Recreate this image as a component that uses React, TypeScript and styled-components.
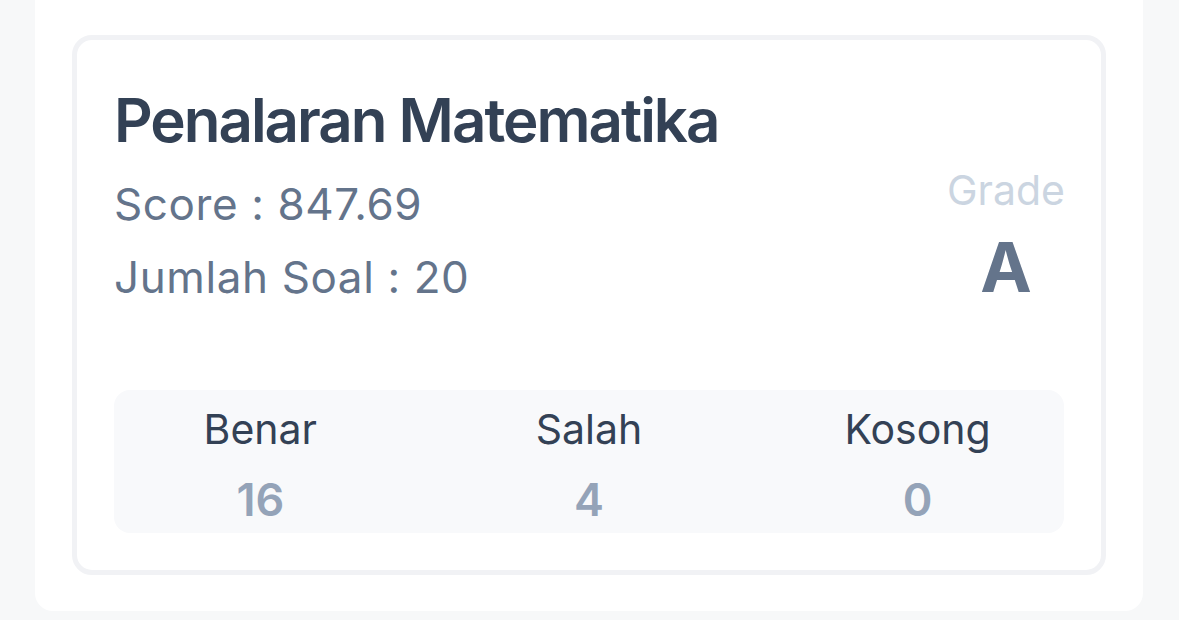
import styled, { createGlobalStyle } from "styled-components"

const GlobalStyle = createGlobalStyle`
    * {
        box-sizing: border-box;
    }
    body {
        margin: 0;
        background: #f7f8f9;
        font-family: Inter, "Noto Sans", sans-serif;
    }
`

const stats = [
    { label: "Benar", value: 16 },
    { label: "Salah", value: 4 },
    { label: "Kosong", value: 0 },
]

export default function App() {
    return (
        <>
            <GlobalStyle />
            <Panel>
                <Card>
                    <Title>Penalaran Matematika</Title>
                    <InfoRow>
                        <Info>
                            <InfoLine>Score : 847.69</InfoLine>
                            <InfoLine>Jumlah Soal : 20</InfoLine>
                        </Info>
                        <GradeBox>
                            <GradeLabel>Grade</GradeLabel>
                            <GradeValue>A</GradeValue>
                        </GradeBox>
                    </InfoRow>
                    <Stats>
                        {stats.map((s) => (
                            <Stat key={s.label}>
                                <StatLabel>{s.label}</StatLabel>
                                <StatValue>{s.value}</StatValue>
                            </Stat>
                        ))}
                    </Stats>
                </Card>
            </Panel>
        </>
    )
}

const Panel = styled.div`
    margin: 0 36px 0 35px;
    padding: 35px 37px 36px 37px;
    background: #ffffff;
    border-radius: 0 0 18px 18px;
`
const Card = styled.div`
    border: 5px solid #f1f2f5;
    border-radius: 20px;
    padding: 44px 37px 37px 37px;
    background: #ffffff;
`
const Title = styled.h2`
    margin: 0;
    color: #334155;
    font-size: 60px;
    font-weight: 600;
    line-height: 72px;
    letter-spacing: -2px;
`
const InfoRow = styled.div`
    display: flex;
    justify-content: space-between;
    align-items: flex-start;
    margin-top: 12px;
`
const Info = styled.div`
    display: flex;
    flex-direction: column;
`
const InfoLine = styled.div`
    color: #64748b;
    font-size: 44px;
    font-weight: 400;
    line-height: 73px;
    letter-spacing: 0.6px;
`
const GradeBox = styled.div`
    display: flex;
    flex-direction: column;
    align-items: center;
    width: 116px;
    margin-top: -2px;
`
const GradeLabel = styled.div`
    color: #cbd5e1;
    font-size: 41px;
    line-height: 48px;
`
const GradeValue = styled.div`
    margin-top: 13px;
    color: #64748b;
    font-size: 69px;
    font-weight: 700;
    line-height: 80px;
`
const Stats = styled.div`
    display: grid;
    grid-template-columns: repeat(3, 1fr);
    column-gap: 36px;
    margin-top: 76px;
    padding: 14px 0 7px 0;
    background: #f8f9fb;
    border-radius: 16px;
`
const Stat = styled.div`
    display: flex;
    flex-direction: column;
    align-items: center;
`
const StatLabel = styled.div`
    color: #334155;
    font-size: 41px;
    line-height: 50px;
`
const StatValue = styled.div`
    margin-top: 20px;
    color: #94a3b8;
    font-size: 45px;
    font-weight: 600;
    line-height: 52px;
`
